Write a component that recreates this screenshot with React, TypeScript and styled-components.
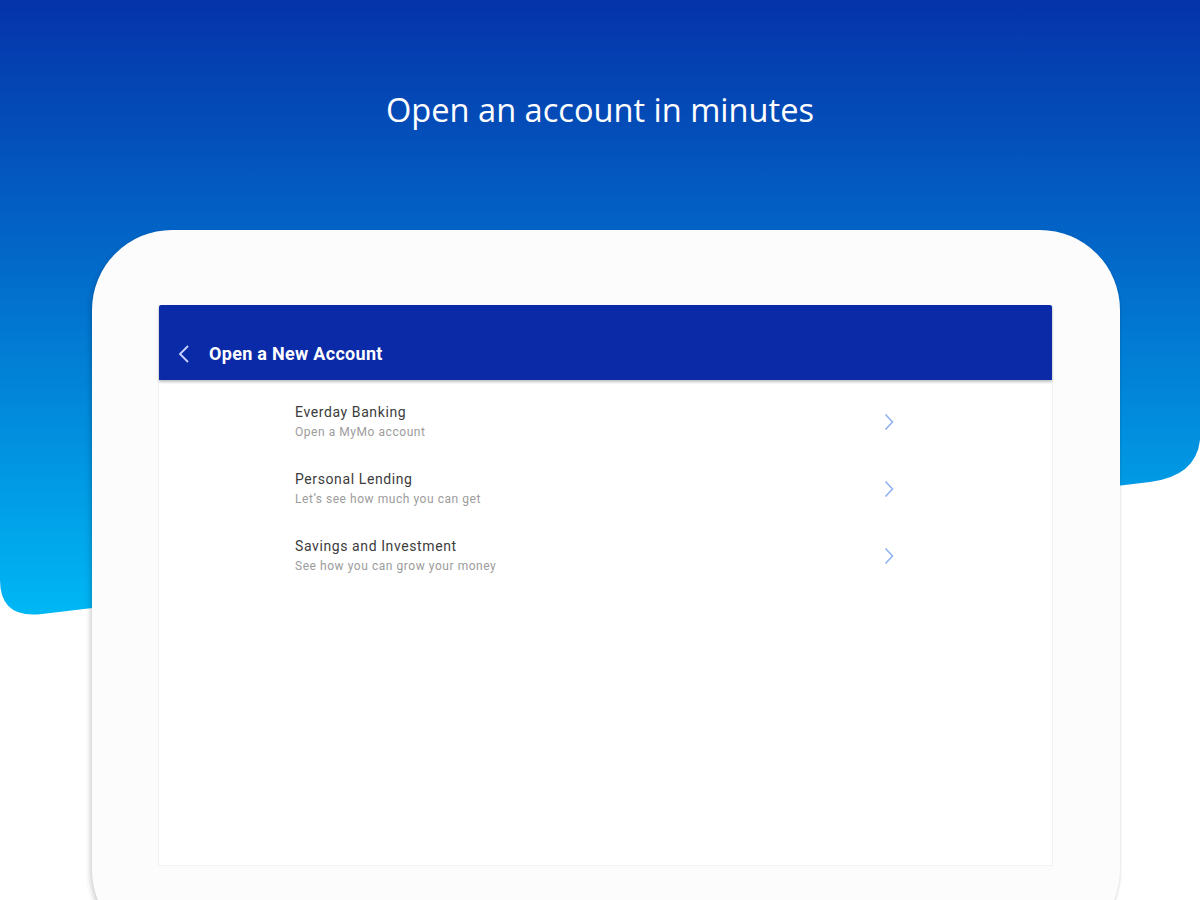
import React from "react";
import styled, { createGlobalStyle } from "styled-components";

const Global = createGlobalStyle`
  html, body { margin: 0; padding: 0; background: #ffffff; }
  * { box-sizing: border-box; }
`;

const Page = styled.div`
  position: relative;
  width: 1200px;
  height: 900px;
  overflow: hidden;
  background: #ffffff;
  font-family: Roboto, "Noto Sans", sans-serif;
`;

const Backdrop = styled.svg`
  position: absolute;
  top: 0;
  left: 0;
  z-index: 0;
`;

const Content = styled.div`
  position: relative;
  z-index: 1;
  display: flex;
  flex-direction: column;
`;

const Heading = styled.h1`
  margin: 90px 0 0;
  text-align: center;
  font-family: "Open Sans", sans-serif;
  font-weight: 400;
  font-size: 32.6px;
  line-height: 40px;
  color: #ffffff;
`;

const Device = styled.div`
  margin: 100px 0 0 92px;
  width: 1028px;
  height: 720px;
  border-radius: 80px;
  background: #fcfcfc;
  box-shadow: -2px 3px 5px rgba(0, 0, 0, 0.18), 1px 0 2px rgba(0, 0, 0, 0.06);
  padding: 75px 67px 0 66px;
`;

const Screen = styled.div`
  height: 561px;
  background: #ffffff;
  border: 1px solid #f2f2f2;
  border-top: none;
  display: flex;
  flex-direction: column;
`;

const AppBar = styled.div`
  height: 75px;
  flex-shrink: 0;
  background: #0b2aa7;
  border-radius: 2px 2px 0 0;
  box-shadow: 0 2px 3px rgba(0, 0, 0, 0.25);
  display: flex;
  align-items: center;
  padding: 22px 0 0 19px;
  gap: 19px;
`;

const AppTitle = styled.span`
  font-family: Roboto, sans-serif;
  font-weight: 700;
  font-size: 18px;
  color: #ffffff;
  letter-spacing: 0.3px;
`;

const List = styled.div`
  display: flex;
  flex-direction: column;
  gap: 18px;
  padding: 17px 158px 0 136px;
`;

const Row = styled.div`
  height: 49px;
  display: flex;
  align-items: center;
  justify-content: space-between;
`;

const RowText = styled.div`
  display: flex;
  flex-direction: column;
  gap: 3px;
`;

const RowTitle = styled.span`
  font-size: 14px;
  line-height: 18px;
  letter-spacing: 0.6px;
  color: #3c3c3c;
`;

const RowSub = styled.span`
  font-size: 12px;
  line-height: 16px;
  letter-spacing: 0.55px;
  color: #9c9c9c;
`;

const BackIcon = () => (
  <svg width="12" height="18" viewBox="0 0 12 18">
    <polyline points="10,1 2,9 10,17" fill="none" stroke="#c9d4ff" strokeWidth="1.8" />
  </svg>
);

const Chevron = () => (
  <svg width="10" height="18" viewBox="0 0 10 18">
    <polyline points="1.5,1.5 8.5,9 1.5,16.5" fill="none" stroke="#8fb2f2" strokeWidth="1.6" />
  </svg>
);

const items = [
  { title: "Everday Banking", sub: "Open a MyMo account" },
  { title: "Personal Lending", sub: "Let\u2019s see how much you can get" },
  { title: "Savings and Investment", sub: "See how you can grow your money" },
];

export default function App() {
  return (
    <>
      <Global />
      <Page>
        <Backdrop width="1200" height="640" viewBox="0 0 1200 640">
          <defs>
            <linearGradient id="bg" x1="0" y1="0" x2="0" y2="614" gradientUnits="userSpaceOnUse">
              <stop offset="0" stopColor="#0533a9" />
              <stop offset="0.5" stopColor="#0273cf" />
              <stop offset="1" stopColor="#00b7f4" />
            </linearGradient>
          </defs>
          <path
            d="M0,0 H1200 V440 Q1196,476 1150,482 L42,614 Q0,619 0,580 Z"
            fill="url(#bg)"
          />
        </Backdrop>
        <Content>
          <Heading>Open an account in minutes</Heading>
          <Device>
            <Screen>
              <AppBar>
                <BackIcon />
                <AppTitle>Open a New Account</AppTitle>
              </AppBar>
              <List>
                {items.map((it) => (
                  <Row key={it.title}>
                    <RowText>
                      <RowTitle>{it.title}</RowTitle>
                      <RowSub>{it.sub}</RowSub>
                    </RowText>
                    <Chevron />
                  </Row>
                ))}
              </List>
            </Screen>
          </Device>
        </Content>
      </Page>
    </>
  );
}
